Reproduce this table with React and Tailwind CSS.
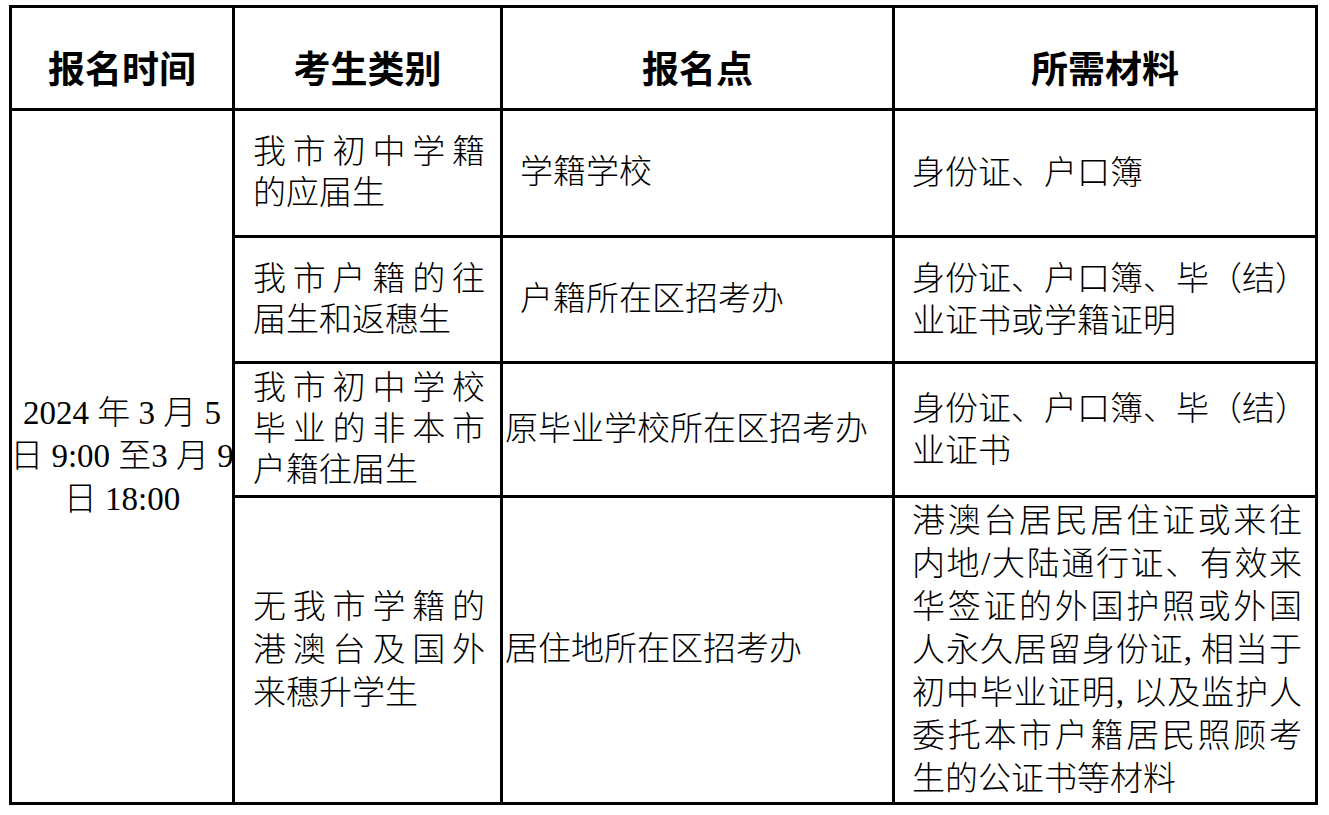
const FONT = { fontFamily: '"Liberation Serif", "Noto Sans CJK SC", serif' }

function Lines({ lines, className = '' }) {
  return (
    <div className={className}>
      {lines.map((l, i) => (
        <div
          key={i}
          className={
            'whitespace-nowrap ' +
            (i < lines.length - 1 ? 'text-justify [text-align-last:justify]' : '')
          }
        >
          {l}
        </div>
      ))}
    </div>
  )
}

const rows = [
  {
    kind: ['我市初中学籍', '的应届生'],
    place: '学籍学校',
    placePad: 'pl-[17px]',
    docs: ['身份证、户口簿'],
  },
  {
    kind: ['我市户籍的往', '届生和返穗生'],
    place: '户籍所在区招考办',
    placePad: 'pl-[17px]',
    docs: ['身份证、户口簿、毕（结）', '业证书或学籍证明'],
  },
  {
    kind: ['我市初中学校', '毕业的非本市', '户籍往届生'],
    place: '原毕业学校所在区招考办',
    placePad: 'pl-[2px]',
    docs: ['身份证、户口簿、毕（结）', '业证书'],
  },
  {
    kind: ['无我市学籍的', '港澳台及国外', '来穗升学生'],
    place: '居住地所在区招考办',
    placePad: 'pl-[2px]',
    docs: [
      '港澳台居民居住证或来往',
      '内地/大陆通行证、有效来',
      '华签证的外国护照或外国',
      '人永久居留身份证, 相当于',
      '初中毕业证明, 以及监护人',
      '委托本市户籍居民照顾考',
      '生的公证书等材料',
    ],
  },
]

const headers = ['报名时间', '考生类别', '报名点', '所需材料']

export default function App() {
  return (
    <div className="min-h-screen bg-white pl-[9px] pt-[5px] text-black" style={FONT}>
      <div className="grid w-[1309px] h-[800px] bg-black p-[3px] gap-[3px] grid-cols-[220px_265px_389px_420px] grid-rows-[100px_124px_123px_131px_304px]">
        {headers.map((h) => (
          <div key={h} className="bg-white flex items-center justify-center pt-[24px] text-[37px] font-bold leading-none">
            {h}
          </div>
        ))}

        <div className="bg-white row-span-4 flex items-center justify-center text-[33px] leading-[43px]">
          <div className="text-center whitespace-nowrap font-light">
            <div>2024 年 3 月 5</div>
            <div>日 9:00 至3 月 9</div>
            <div>日 18:00</div>
          </div>
        </div>

        {rows.map((r, i) => {
          const last = i === rows.length - 1
          return [
            <div key={'k' + i} className={'bg-white flex items-center pl-[18px] pr-[15px] text-[33px] font-light ' + (last ? 'leading-[43px]' : 'leading-[41px]')}>
              <Lines lines={r.kind} className="w-full" />
            </div>,
            <div key={'p' + i} className={'bg-white flex items-center text-[33px] font-light whitespace-nowrap ' + r.placePad}>
              {r.place}
            </div>,
            <div key={'d' + i} className={'bg-white flex items-center pl-[17px] pr-[13px] text-[33px] font-light ' + (last ? 'leading-[43px]' : 'leading-[42px]')}>
              <Lines lines={r.docs} className={last ? 'w-full' : ''} />
            </div>,
          ]
        })}
      </div>
    </div>
  )
}
